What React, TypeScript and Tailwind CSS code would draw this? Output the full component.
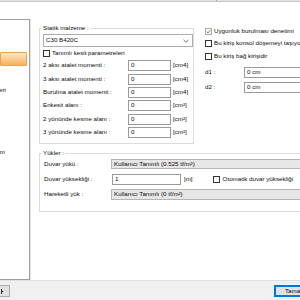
import React from 'react';

const font = { fontFamily: '"Liberation Sans", Arial, sans-serif' };

const NumRow: React.FC<{ label: string; unit: string; mt: string }> = ({ label, unit, mt }) => (
  <div className={`flex items-center h-[11px] ${mt}`}>
    <span className="w-[85px] whitespace-nowrap">{label}</span>
    <div className="w-[43px] h-[11px] border border-[#9a9a9a] bg-white flex items-center pl-[2px]">0</div>
    <span className="ml-[2px] whitespace-nowrap">{unit}</span>
  </div>
);

const Box: React.FC<{ checked?: boolean; dim?: boolean }> = ({ checked, dim }) => (
  <div className={`w-[7px] h-[7px] shrink-0 border bg-white flex items-center justify-center ${dim ? 'border-[#a8a8a8]' : 'border-[#333]'}`}>
    {checked && (
      <svg width="5" height="5" viewBox="0 0 5 5">
        <path d="M0.6 2.6 L2 4 L4.5 1" fill="none" stroke="#707070" strokeWidth="0.9" />
      </svg>
    )}
  </div>
);

export default function App() {
  return (
    <div className="w-[300px] h-[300px] overflow-hidden bg-white flex flex-col text-[6.2px] leading-none text-[#0a0a0a]" style={font}>
      {/* top strip */}
      <div className="h-[2px] bg-[#e6e6e6] border-b border-[#c4c4c4] flex">
        <div className="ml-[216px] w-[1px] h-full bg-[#a0a0a0]" />
      </div>

      <div className="h-[278px] flex">
        {/* left tree panel */}
        <div className="w-[31px] pt-[17px] flex flex-col">
          <div className="flex-1 w-[30px] border-t border-r border-b border-[#a0a0a0] shadow-[1px_0_0_#e3e3e3] bg-white flex flex-col">
            <div className="mt-[32px] w-[27px] h-[14px] rounded-[1px] border border-[#e6a24c] bg-gradient-to-b from-[#fde7c4] to-[#f6b058]" />
            <div className="mt-[20px] w-[6px] h-[8px] flex items-center justify-end overflow-hidden whitespace-nowrap">Malzemeleri</div>
            <div className="mt-[54px] w-[5px] h-[8px] flex items-center justify-end overflow-hidden whitespace-nowrap">Hesap sistem</div>
          </div>
        </div>

        {/* content */}
        <div className="flex-1 flex flex-col overflow-hidden">
          <div className="flex items-start">
            {/* Statik malzeme */}
            <div className="relative ml-[8px] mt-[26px] w-[160px] h-[116px] border border-[#dcdcdc] pl-[3px] pt-[5px] flex flex-col">
              <span className="absolute -top-[4px] left-[2px] bg-white px-[1px] whitespace-nowrap">Statik malzeme :</span>
              <div className="w-[150px] h-[13px] border border-[#acacac] bg-white flex items-center justify-between pl-[2px] pr-[3px]">
                <span>C30 B420C</span>
                <svg width="6" height="4" viewBox="0 0 6 4">
                  <path d="M0.5 0.8 L3 3.2 L5.5 0.8" fill="none" stroke="#555" strokeWidth="0.8" />
                </svg>
              </div>
              <div className="mt-[3px] flex items-center gap-[2px]">
                <Box />
                <span className="whitespace-nowrap">Tanımlı kesit parametreleri</span>
              </div>
              <NumRow label="2 aksı atalet momenti :" unit="[cm4]" mt="mt-[3px]" />
              <NumRow label="3 aksı atalet momenti :" unit="[cm4]" mt="mt-[3px]" />
              <NumRow label="Burulma atalet momenti :" unit="[cm4]" mt="mt-[2px]" />
              <NumRow label="Enkesit alanı :" unit="[cm²]" mt="mt-[2px]" />
              <NumRow label="2 yönünde kesme alanı :" unit="[cm²]" mt="mt-[3px]" />
              <NumRow label="3 yönünde kesme alanı :" unit="[cm²]" mt="mt-[2px]" />
            </div>

            {/* right options */}
            <div className="ml-[11px] mt-[26px] flex flex-col">
              <div className="flex items-center gap-[2px] h-[7px]">
                <Box checked dim />
                <span className="whitespace-nowrap">Uygunluk burulması denetimi</span>
              </div>
              <div className="mt-[5px] flex items-center gap-[2px] h-[7px]">
                <Box />
                <span className="whitespace-nowrap">Bu kiriş konsol döşemeyi taşıyor</span>
              </div>
              <div className="mt-[6px] flex items-center gap-[2px] h-[7px]">
                <Box />
                <span className="whitespace-nowrap">Bu kiriş bağ kirişidir</span>
              </div>
              <div className="mt-[7px] flex items-center h-[11px]">
                <span className="w-[39px]">d1 :</span>
                <div className="w-[70px] h-[11px] border border-[#9a9a9a] bg-white flex items-center pl-[2px]">0 cm</div>
              </div>
              <div className="mt-[4px] flex items-center h-[11px]">
                <span className="w-[39px]">d2 :</span>
                <div className="w-[70px] h-[11px] border border-[#9a9a9a] bg-white flex items-center pl-[2px]">0 cm</div>
              </div>
            </div>
          </div>

          {/* Yükler */}
          <div className="relative ml-[8px] mt-[9px] w-[290px] h-[59px] border border-[#dcdcdc] pl-[4px] pt-[5px] flex flex-col">
            <span className="absolute -top-[4px] left-[2px] bg-white px-[1px] whitespace-nowrap">Yükler :</span>
            <div className="flex items-center h-[10px]">
              <span className="w-[67px] whitespace-nowrap">Duvar yükü :</span>
              <div className="flex-1 h-[10px] border border-[#b4b4b4] bg-[#e6e6e6] flex items-center pl-[2px] whitespace-nowrap">Kullanıcı Tanımlı (0.525 tf/m²)</div>
            </div>
            <div className="mt-[5px] flex items-center h-[11px]">
              <span className="w-[68px] whitespace-nowrap">Duvar yüksekliği :</span>
              <div className="w-[69px] h-[11px] border border-[#9a9a9a] bg-white flex items-center pl-[2px]">1</div>
              <span className="ml-[3px]">[m]</span>
              <div className="ml-[20px] flex items-center gap-[3px]">
                <Box />
                <span className="whitespace-nowrap">Otomatik duvar yüksekliği</span>
              </div>
            </div>
            <div className="mt-[4px] flex items-center h-[11px]">
              <span className="w-[67px] whitespace-nowrap">Hareketli yük :</span>
              <div className="flex-1 h-[11px] border border-[#b4b4b4] bg-[#e6e6e6] flex items-center pl-[2px] whitespace-nowrap">Kullanıcı Tanımlı (0 tf/m²)</div>
            </div>
          </div>
        </div>
      </div>

      {/* bottom buttons */}
      <div className="h-[20px] bg-[#f0f0f0] border-t border-[#e0e0e0] flex items-start pt-[4px] overflow-hidden">
        <div className="-ml-[4px] w-[14px] h-[12px] border border-[#adadad] bg-[#e1e1e1] flex items-center justify-end pr-[5px]">
          <svg width="3" height="5" viewBox="0 0 3 5">
            <path d="M0.5 0 V5" stroke="#333" strokeWidth="1" />
            <path d="M1 1.5 L2.6 2.5 L1 3.5 Z" fill="#333" />
          </svg>
        </div>
        <div className="ml-auto -mr-[14px] w-[40px] h-[12px] border-2 border-[#0078d7] bg-[#e1e1e1] flex items-center pl-[9px] whitespace-nowrap">Tamam</div>
      </div>
    </div>
  );
}
